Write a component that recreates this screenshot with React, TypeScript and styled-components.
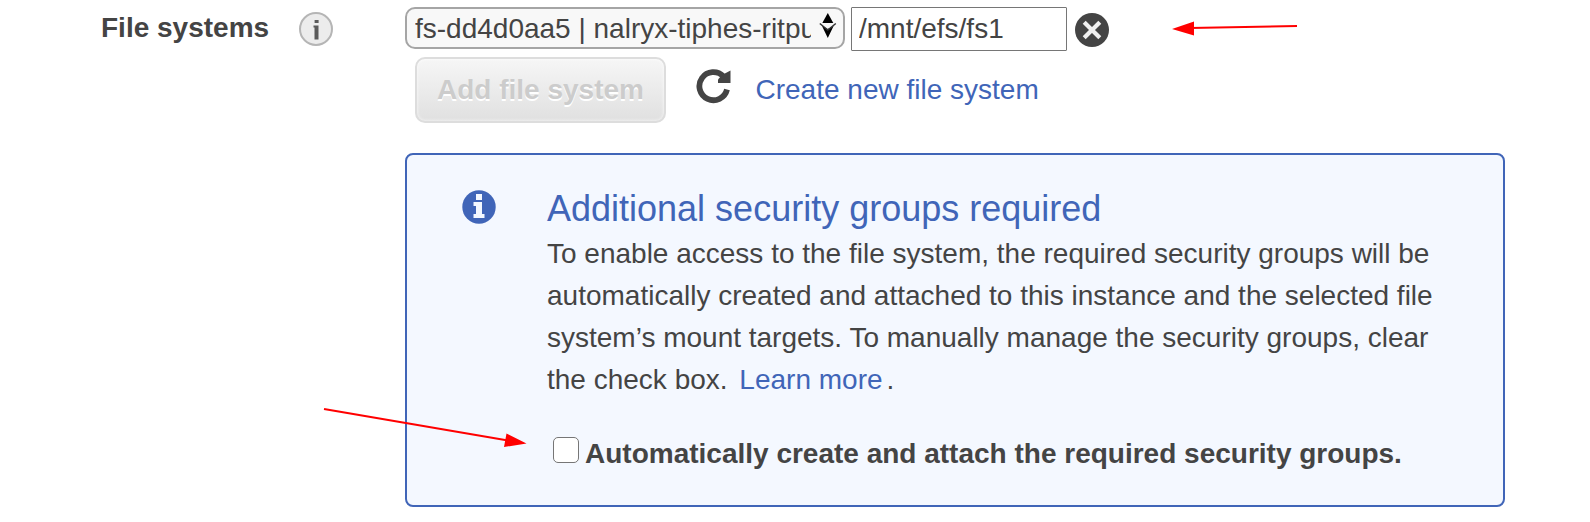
import React, { useState } from "react";
import styled, { createGlobalStyle } from "styled-components";

const GlobalStyle = createGlobalStyle`
  * { box-sizing: border-box; }
  body {
    margin: 0;
    background: #fff;
    color: #444;
    font-family: "Liberation Sans", Arial, sans-serif;
    font-size: 28px;
    line-height: 42px;
  }
`;

const Page = styled.main`
  position: relative;
  display: grid;
  grid-template-columns: 405px 1100px;
  width: 1590px;
  height: 522px;
  padding-top: 7px;
  overflow: hidden;
`;

const LabelCell = styled.div`
  display: flex;
  align-items: flex-start;
  padding-left: 101px;
  font-weight: bold;
`;

const FieldLabel = styled.span`
  width: 197px;
  white-space: nowrap;
`;

const IconSlot = styled.span<{ $top?: number; $left?: number }>`
  display: block;
  flex: none;
  line-height: 0;
  margin-top: ${(p) => p.$top ?? 0}px;
  margin-left: ${(p) => p.$left ?? 0}px;
`;

const Fields = styled.div`
  display: flex;
  flex-direction: column;
`;

const MountRow = styled.div`
  display: flex;
  align-items: flex-start;
  gap: 6px;
  height: 44px;
`;

const SelectBox = styled.div`
  display: flex;
  width: 440px;
  height: 42px;
  padding: 0 6px 0 8px;
  border: 2px solid #a5a5a5;
  border-radius: 10px;
  background: #f8f8f8;
  line-height: 40px;
`;

const SelectValue = styled.span`
  width: 396px;
  height: 38px;
  margin-right: 8px;
  overflow: hidden;
  white-space: nowrap;
`;

const PathInput = styled.input`
  width: 216px;
  height: 44px;
  padding: 0 7px 1px;
  border: 1px solid #767676;
  border-radius: 1px;
  background: #fff;
  color: #444;
  font: inherit;
  line-height: 41px;
`;

const ActionRow = styled.div`
  display: flex;
  align-items: flex-start;
  height: 66px;
  margin: 6px 0 30px 10px;
`;

const AddButton = styled.button`
  width: 251px;
  height: 66px;
  padding: 0;
  border: 2px solid #ddd;
  border-radius: 10px;
  background: linear-gradient(#f6f6f6, #e0e0e0);
  box-shadow: inset 0 0 3px 1px rgba(255, 255, 255, 0.5);
  color: #ccc;
  font: inherit;
  font-weight: bold;
  text-shadow: 0 2px 0 #fff;
`;

const Link = styled.a`
  color: #4065b8;
  text-decoration: none;
`;

const CreateLink = styled(Link)`
  margin: 12px 0 0 24.5px;
`;

const Notice = styled.section`
  display: flex;
  height: 354px;
  padding: 34px 40px 0 55px;
  border: 2px solid #4065b8;
  border-radius: 8px;
  background: #f4f8ff;
`;

const NoticeBody = styled.div`
  margin-left: 51px;
  white-space: nowrap;
`;

const NoticeTitle = styled.h2`
  margin: -1px 0 3px;
  color: #4065b8;
  font-size: 36px;
  font-weight: normal;
  line-height: 42px;
`;

const NoticeText = styled.p`
  margin: 0;
`;

const LearnMore = styled(Link)`
  margin: 0 4px;
`;

const CheckRow = styled.label`
  display: flex;
  align-items: flex-start;
  margin-top: 32px;
  font-weight: bold;
`;

const Checkbox = styled.input`
  appearance: none;
  width: 26px;
  height: 26px;
  margin: 4px 6px 0;
  border: 1px solid #767676;
  border-radius: 5px;
  background: #fff;
`;

const Arrows = styled.svg`
  position: absolute;
  inset: 0;
  pointer-events: none;
`;

const InfoBadge = () => (
  <svg width="36" height="36" viewBox="0 0 36 36">
    <circle cx="18" cy="18" r="16" fill="#ececec" stroke="#b5b5b5" strokeWidth="2" />
    <path d="M16.600 9h4v3h-4zM15.500 14.500h5V28.500h-4V16.500h-1z" fill="#5a5a5a" />
  </svg>
);

const NoticeIcon = () => (
  <svg width="34" height="34" viewBox="0 0 34 34">
    <circle cx="17" cy="17" r="16.700" fill="#4065b8" />
    <path d="M14 4h6v6h-6zM11.500 12h8.500v12h2.500v4h-11v-4h2.500v-8h-2.500z" fill="#f4f8ff" />
  </svg>
);

const RemoveIcon = () => (
  <svg width="34" height="34" viewBox="0 0 34 34">
    <circle cx="17" cy="17" r="17" fill="#444" />
    <path d="M9.200 9.200L24.800 24.800M24.800 9.200L9.200 24.800" stroke="#f0f0f0" strokeWidth="4.200" />
  </svg>
);

const RefreshIcon = () => (
  <svg width="35" height="35" viewBox="0 0 35 35">
    <path d="M27.500 7.500A14 14 0 1 0 31 20.500" fill="none" stroke="#444" strokeWidth="5.800" />
    <path d="M34.500 1.500V14H22V10.500L26 6Z" fill="#444" />
  </svg>
);

const SelectArrows = () => (
  <svg width="18" height="26" viewBox="0 0 18 26">
    <path d="M8.800 0L14.300 10H3.300Z" fill="#000" />
    <path d="M3 13L8.800 16L14.600 13L8.800 25Z" fill="#000" />
    <path d="M0.800 10.500L8.800 17L16.800 10.500" fill="none" stroke="#333" strokeWidth="1.500" />
  </svg>
);

export default function App() {
  const [path, setPath] = useState("/mnt/efs/fs1");
  const [attach, setAttach] = useState(false);
  return (
    <>
      <GlobalStyle />
      <Page>
        <LabelCell>
          <FieldLabel>File systems</FieldLabel>
          <IconSlot $top={4}><InfoBadge /></IconSlot>
        </LabelCell>
        <Fields>
          <MountRow>
            <SelectBox>
              <SelectValue>fs-dd4d0aa5 | nalryx-tiphes-ritpu</SelectValue>
              <IconSlot $top={4}><SelectArrows /></IconSlot>
            </SelectBox>
            <PathInput value={path} onChange={(e) => setPath(e.target.value)} />
            <IconSlot $top={6} $left={2}><RemoveIcon /></IconSlot>
          </MountRow>
          <ActionRow>
            <AddButton disabled>Add file system</AddButton>
            <IconSlot $top={11.5} $left={30}><RefreshIcon /></IconSlot>
            <CreateLink href="#">Create new file system</CreateLink>
          </ActionRow>
          <Notice>
            <IconSlot $top={1}><NoticeIcon /></IconSlot>
            <NoticeBody>
              <NoticeTitle>Additional security groups required</NoticeTitle>
              <NoticeText>
                To enable access to the file system, the required security groups will be<br />
                automatically created and attached to this instance and the selected file<br />
                system’s mount targets. To manually manage the security groups, clear<br />
                the check box. <LearnMore href="#">Learn more</LearnMore>.
              </NoticeText>
              <CheckRow>
                <Checkbox type="checkbox" checked={attach} onChange={() => setAttach(!attach)} />
                Automatically create and attach the required security groups.
              </CheckRow>
            </NoticeBody>
          </Notice>
        </Fields>
        <Arrows width="1590" height="522" viewBox="0 0 1590 522">
          <g stroke="#f00" strokeWidth="2">
            <path d="M1297 26L1190 28" />
            <path d="M324 409L508 440.500" />
          </g>
          <path d="M1172 29L1194 21.500V35.500ZM526.500 443.500L506.500 433.500L504 447Z" fill="#f00" />
        </Arrows>
      </Page>
    </>
  );
}
